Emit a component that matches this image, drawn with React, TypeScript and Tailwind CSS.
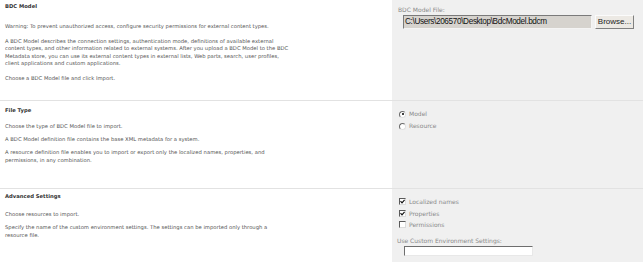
import React from 'react';

const bodyFont = { fontFamily: '"DejaVu Sans", Verdana, sans-serif' };
const arial = { fontFamily: '"Liberation Sans", Arial, sans-serif' };

const Radio = ({ checked }: { checked?: boolean }) => (
  <span className="relative inline-block w-[7px] h-[7px] rounded-full border border-t-[#6a6a6a] border-l-[#6a6a6a] border-b-[#e0e0e0] border-r-[#e0e0e0] bg-white">
    {checked && <span className="absolute left-[1.5px] top-[1.5px] w-[2px] h-[2px] rounded-full bg-black" />}
  </span>
);

const Check = ({ checked }: { checked?: boolean }) => (
  <span className="relative inline-flex items-center justify-center w-[7px] h-[7px] border border-t-[#5a5a5a] border-l-[#5a5a5a] border-b-[#dcdcdc] border-r-[#dcdcdc] bg-white">
    {checked && (
      <svg width="5" height="5" viewBox="0 0 5 5">
        <path d="M0.5 2.2 L2 3.8 L4.6 0.8" stroke="#111" strokeWidth="1.2" fill="none" />
      </svg>
    )}
  </span>
);

const Section: React.FC<{ left: React.ReactNode; right: React.ReactNode; className?: string; rightClass?: string }> = ({
  left,
  right,
  className,
  rightClass,
}) => (
  <div className={`flex border-t border-[#e2e2e2] ${className ?? ''}`}>
    <div className="w-[392px] shrink-0 px-[5px] bg-white">{left}</div>
    <div className={`flex-1 bg-[#f0f0f0] ${rightClass ?? ''}`}>{right}</div>
  </div>
);

export default function App() {
  return (
    <div className="w-[643px] h-[262px] bg-white overflow-hidden flex flex-col text-[5.25px] leading-[7.5px] text-[#555]" style={bodyFont}>
      {/* BDC Model */}
      <div className="flex h-[100px]">
        <div className="w-[392px] shrink-0 px-[5px] pt-[2px]">
          <div className="font-bold text-[#333] leading-[8px]">BDC Model</div>
          <p className="mt-[13px]">Warning: To prevent unauthorized access, configure security permissions for external content types.</p>
          <p className="mt-[7px]">
            A BDC Model describes the connection settings, authentication mode, definitions of available external
            <br />
            content types, and other information related to external systems. After you upload a BDC Model to the BDC
            <br />
            Metadata store, you can use its external content types in external lists, Web parts, search, user profiles,
            <br />
            client applications and custom applications.
          </p>
          <p className="mt-[7px]">Choose a BDC Model file and click Import.</p>
        </div>
        <div className="flex-1 bg-[#f0f0f0] pl-[6px] pt-[6px]">
          <div className="text-[#8a8a8a] text-[6px] leading-[8px]">BDC Model File:</div>
          <div className="flex items-center mt-[1px] pl-[5px] gap-[3px]">
            <div
              className="w-[189px] h-[14px] bg-[#d6d3ce] border border-t-[#7a7a7a] border-l-[#7a7a7a] border-b-[#f4f4f4] border-r-[#f4f4f4] px-[1px] flex items-center text-[8.2px] text-[#111] tracking-[-0.35px]"
              style={arial}
            >
              C:\Users\206570\Desktop\BdcModel.bdcm
            </div>
            <button
              className="w-[39px] h-[14px] bg-[#ece9e4] border border-t-[#fbfbfb] border-l-[#fbfbfb] border-b-[#808080] border-r-[#808080] text-[8px] text-[#222] leading-none"
              style={arial}
            >
              Browse...
            </button>
          </div>
        </div>
      </div>

      {/* File Type */}
      <Section
        className="h-[88px]"
        left={
          <div className="pt-[5px]">
            <div className="font-bold text-[#333] leading-[8px]">File Type</div>
            <p className="mt-[9px]">Choose the type of BDC Model file to import.</p>
            <p className="mt-[5.5px]">A BDC Model definition file contains the base XML metadata for a system.</p>
            <p className="mt-[5.5px]">
              A resource definition file enables you to import or export only the localized names, properties, and
              <br />
              permissions, in any combination.
            </p>
          </div>
        }
        rightClass="pt-[7px] pl-[7px]"
        right={
          <div className="flex flex-col text-[#8a8a8a] text-[6px]">
            <label className="flex items-center gap-[3px] h-[12px]">
              <Radio checked />
              Model
            </label>
            <label className="flex items-center gap-[3px] h-[12px]">
              <Radio />
              Resource
            </label>
          </div>
        }
      />

      {/* Advanced Settings */}
      <Section
        className="flex-1"
        left={
          <div className="pt-[3px]">
            <div className="font-bold text-[#333] leading-[8px]">Advanced Settings</div>
            <p className="mt-[11px]">Choose resources to import.</p>
            <p className="mt-[5.5px]">
              Specify the name of the custom environment settings. The settings can be imported only through a
              <br />
              resource file.
            </p>
          </div>
        }
        rightClass="pt-[7px] pl-[7px]"
        right={
          <div className="flex flex-col text-[#8a8a8a] text-[6px]">
            <label className="flex items-center gap-[3px] h-[11.5px]">
              <Check checked />
              Localized names
            </label>
            <label className="flex items-center gap-[3px] h-[11.5px]">
              <Check checked />
              Properties
            </label>
            <label className="flex items-center gap-[3px] h-[11.5px]">
              <Check />
              Permissions
            </label>
            <div className="mt-[6px] -ml-[2px] leading-[8px]">Use Custom Environment Settings:</div>
            <div className="ml-[5px] mt-[1px] w-[129px] h-[10px] bg-white border border-t-[#6e6e6e] border-l-[#6e6e6e] border-b-[#e8e8e8] border-r-[#e8e8e8]" />
          </div>
        }
      />
    </div>
  );
}
